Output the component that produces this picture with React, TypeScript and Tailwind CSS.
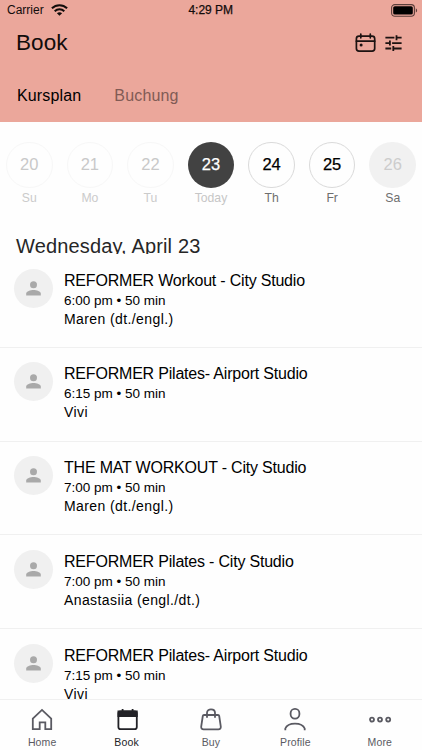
import React from 'react';

type Day = { num: string; label: string; circle: string; text: string };

const days: Day[] = [
  { num: '20', label: 'Su', circle: 'border border-[#f7f7f7] text-[#c9c9c9]', text: 'text-[#cbcbcb]' },
  { num: '21', label: 'Mo', circle: 'border border-[#f7f7f7] text-[#c9c9c9]', text: 'text-[#cbcbcb]' },
  { num: '22', label: 'Tu', circle: 'border border-[#f7f7f7] text-[#c9c9c9]', text: 'text-[#cbcbcb]' },
  { num: '23', label: 'Today', circle: 'bg-[#424242] text-white [-webkit-text-stroke:0.25px_white]', text: 'text-[#c6c6c6]' },
  { num: '24', label: 'Th', circle: 'border border-[#dadada] text-black [-webkit-text-stroke:0.25px_black]', text: 'text-[#6e6e6e]' },
  { num: '25', label: 'Fr', circle: 'border border-[#dadada] text-black [-webkit-text-stroke:0.25px_black]', text: 'text-[#6e6e6e]' },
  { num: '26', label: 'Sa', circle: 'bg-[#f1f1f1] text-[#cccccc]', text: 'text-[#6e6e6e]' },
];

const classes = [
  { title: 'REFORMER Workout - City Studio', time: '6:00 pm • 50 min', coach: 'Maren (dt./engl.)' },
  { title: 'REFORMER Pilates- Airport Studio', time: '6:15 pm • 50 min', coach: 'Vivi' },
  { title: 'THE MAT WORKOUT - City Studio', time: '7:00 pm • 50 min', coach: 'Maren (dt./engl.)' },
  { title: 'REFORMER Pilates - City Studio', time: '7:00 pm • 50 min', coach: 'Anastasiia (engl./dt.)' },
  { title: 'REFORMER Pilates- Airport Studio', time: '7:15 pm • 50 min', coach: 'Vivi' },
];

function WifiIcon() {
  return (
    <svg width="17" height="12" viewBox="0 0 17 12" fill="none" stroke="#120c0b" strokeWidth="2">
      <path d="M0.9 4.3C5.2 0.1 11.8 0.1 16.1 4.3" />
      <path d="M3.7 7.2C6.4 4.6 10.6 4.6 13.3 7.2" />
      <path d="M8.5 11.8 5.9 9.2C7.4 7.9 9.6 7.9 11.1 9.2Z" fill="#120c0b" stroke="none" />
    </svg>
  );
}

function BatteryIcon() {
  return (
    <svg width="27" height="13" viewBox="0 0 27 13">
      <rect x="0.6" y="0.6" width="22.8" height="11.6" rx="3.2" fill="none" stroke="#5b3e3a" strokeWidth="1.1" />
      <rect x="2.2" y="2.2" width="19.6" height="8.4" rx="1.6" fill="#000" />
      <path d="M24.8 4.2C26.6 4.9 26.6 7.9 24.8 8.6Z" fill="#5b3e3a" />
    </svg>
  );
}

function CalendarIcon() {
  return (
    <svg width="21" height="20" viewBox="0 0 21 20" fill="none" stroke="#1c1211" strokeWidth="1.7" strokeLinecap="round">
      <rect x="1.4" y="3.1" width="18.3" height="15.1" rx="2.6" />
      <path d="M1.4 8.2H19.7M5.8 1.1V4.8M15.3 1.1V4.8" />
      <circle cx="6.1" cy="12" r="1.5" fill="#1c1211" stroke="none" />
    </svg>
  );
}

function FilterIcon() {
  return (
    <svg width="17" height="17" viewBox="0 0 17 17" fill="none" stroke="#1c1211" strokeWidth="1.8">
      <path d="M0.4 2.7H9.4M11.5 2.7H16.6M11.5 0.2V5.2M0.4 8.1H4.9M7.1 8.1H16.6M4.9 5.6V10.6M0.4 13.5H6.2M8.3 13.5H16.6M8.3 11V16" />
    </svg>
  );
}

function Avatar() {
  return (
    <div className="flex size-[39px] shrink-0 items-center justify-center rounded-full bg-[#f0f0f0]">
      <svg width="15" height="15" viewBox="0 0 15 15" fill="#a9a9a9">
        <circle cx="7.5" cy="3.8" r="3.5" />
        <path d="M0.2 14.6V12.5C0.2 10.2 4.4 8.9 7.5 8.9S14.8 10.2 14.8 12.5V14.6Z" />
      </svg>
    </div>
  );
}

const tabs: { label: string; active?: boolean; icon: React.ReactNode }[] = [
  {
    label: 'Home',
    icon: <path d="M2.8 10.7 12 1.9 21.2 10.7V21.1H15.3V14.3H9.7V21.1H2.8Z" />,
  },
  {
    label: 'Book',
    active: true,
    icon: (
      <>
        <rect x="3.4" y="3.4" width="18.4" height="17.8" rx="2.2" />
        <path d="M3.4 3.4H21.8V8.2H3.4Z" fill="currentColor" />
        <path d="M7.6 1V4M17.6 1V4" />
      </>
    ),
  },
  {
    label: 'Buy',
    icon: (
      <>
        <path d="M5 7H19Q20 7 20.2 8L21.8 18.6Q22 21.3 19.4 21.3H4.6Q2 21.3 2.2 18.6L3.8 8Q4 7 5 7Z" />
        <path d="M8 9.8V4.8C8 0.1 16 0.1 16 4.8V9.8" />
      </>
    ),
  },
  {
    label: 'Profile',
    icon: (
      <>
        <rect x="7.6" y="0.9" width="8.8" height="9.7" rx="4.3" />
        <path d="M2.3 22.3V20.5C5 13.9 19 13.9 21.7 20.5V22.3" />
      </>
    ),
  },
  {
    label: 'More',
    icon: (
      <>
        <circle cx="4" cy="11.6" r="2" />
        <circle cx="12" cy="11.6" r="2" />
        <circle cx="20.2" cy="11.6" r="2" />
      </>
    ),
  },
];

export default function App() {
  return (
    <div className="flex h-[750px] w-[422px] flex-col overflow-hidden bg-[#fefefe] font-['Liberation_Sans',Arial,sans-serif] text-black">
      <header className="h-[122px] shrink-0 bg-[#eba79b]">
        <div className="grid h-5 grid-cols-3 items-center pl-[7px] pr-[4px] text-[12px] leading-5">
          <div className="flex items-center gap-[7px] text-[#120c0b]">
            <span>Carrier</span>
            <WifiIcon />
          </div>
          <div className="-mt-px pr-[3.5px] text-center text-[#120c0b] [-webkit-text-stroke:0.25px_#120c0b]">4:29 PM</div>
          <div className="flex justify-end">
            <BatteryIcon />
          </div>
        </div>
        <div className="flex h-[46px] items-center justify-between pl-4 pr-[20px]">
          <h1 className="text-[22.5px] tracking-[0.1px] text-[#120c0b]">Book</h1>
          <div className="flex items-center gap-[9px]">
            <CalendarIcon />
            <FilterIcon />
          </div>
        </div>
        <nav className="flex h-[56px] items-center gap-[33px] pl-[17px] pt-[4px] text-[16px] tracking-[0.15px]">
          <span className="text-black">Kursplan</span>
          <span className="text-[#815b55]">Buchung</span>
        </nav>
      </header>

      <section className="-mx-[1px] grid shrink-0 grid-cols-7 pt-[19.5px]">
        {days.map((d) => (
          <div key={d.num} className="flex flex-col items-center">
            <div className={`flex size-[46.5px] items-center justify-center rounded-full text-[16.5px] ${d.circle}`}>{d.num}</div>
            <div className={`mt-px text-[12.2px] leading-[18px] ${d.text}`}>{d.label}</div>
          </div>
        ))}
      </section>

      <h2 className="mt-[26px] h-[21px] shrink-0 overflow-hidden pl-4 text-[20px] leading-[26px] tracking-[0.15px] text-[#262626]">
        Wednesday, April 23
      </h2>

      <main className="min-h-0 flex-1 overflow-hidden">
        {classes.map((c, i) => (
          <div key={i} className="flex h-[93.75px] gap-[11px] border-b border-[#f0f0f0] pl-[14px] pt-[14.5px]">
            <Avatar />
            <div>
              <div className="text-[16px] leading-[24px] tracking-[-0.2px]">{c.title}</div>
              <div className="-mt-px text-[13.5px] leading-[18px]">{c.time}</div>
              <div className="text-[14px] leading-[18px] tracking-[0.4px]">{c.coach}</div>
            </div>
          </div>
        ))}
      </main>

      <footer className="grid h-[51px] shrink-0 grid-cols-5 border-t border-[#f0f0f0] bg-[#fefefe] pt-[8px]">
        {tabs.map((t) => (
          <div key={t.label} className={`flex flex-col items-center ${t.active ? 'text-[#222227]' : 'text-[#5a5a62]'}`}>
            <svg width="24" height="24" viewBox="0 0 24 24" fill="none" stroke="currentColor" strokeWidth="1.8">
              {t.icon}
            </svg>
            <span className="mt-[3px] text-[10.5px] leading-[14px] tracking-[0.15px]">{t.label}</span>
          </div>
        ))}
      </footer>
    </div>
  );
}
